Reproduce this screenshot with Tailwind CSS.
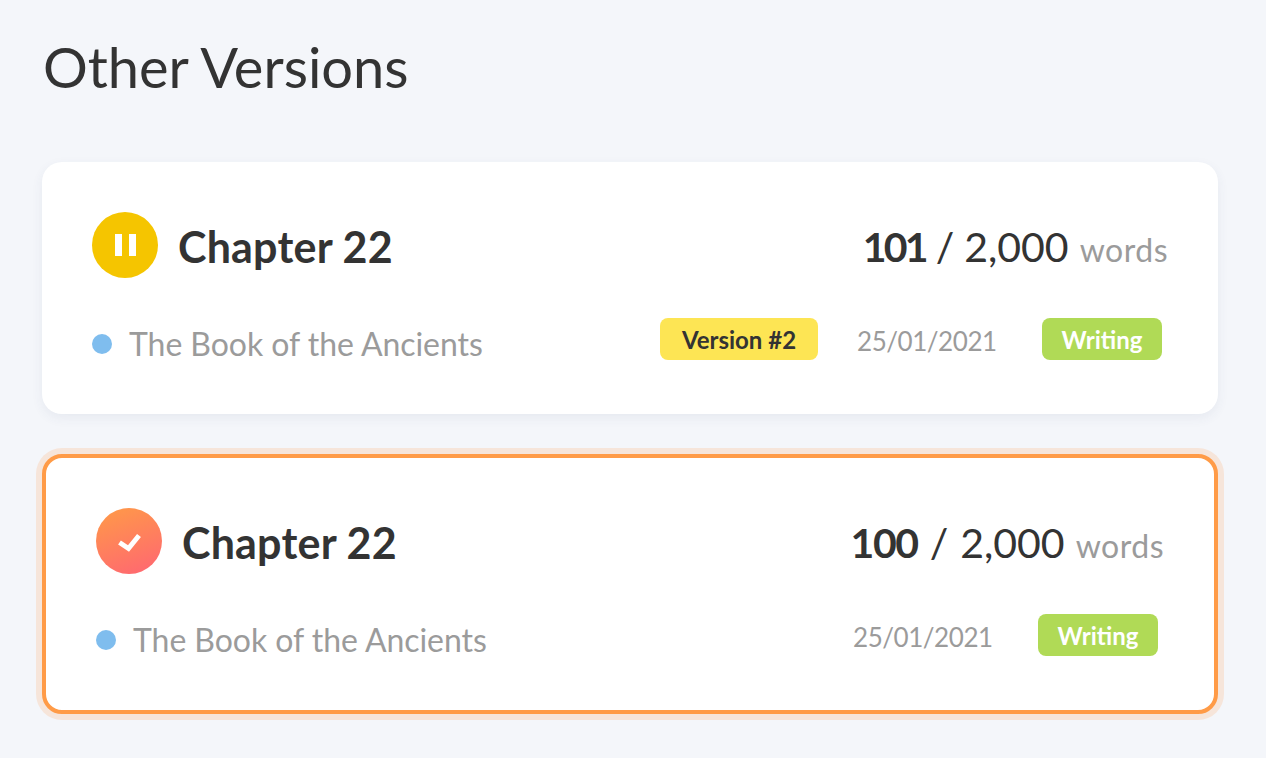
<!DOCTYPE html>
<html lang="en">
<head>
    <meta charset="utf-8">
    <title>Other Versions</title>
    <script src="https://cdn.jsdelivr.net/npm/@tailwindcss/browser@4"></script>
</head>
<body class="bg-[#f4f6fa] font-['Lato',sans-serif] text-[#333333] w-[1266px] h-[758px] overflow-hidden">
    <div class="px-[42px] pr-[48px]">
        <h1 class="h-[162px] pt-[32px] pl-[1px] text-[56px] leading-[70px] font-normal">Other Versions</h1>

        <!-- Paused version -->
        <div class="bg-white rounded-[20px] h-[252px] pt-[50px] px-[50px] shadow-[0_4px_12px_rgba(60,70,110,0.07)]">
            <div class="flex items-center justify-between h-[66px]">
                <div class="flex items-center gap-[20px]">
                    <div class="w-[66px] h-[66px] rounded-full bg-[#f5c500] flex items-center justify-center gap-[7px]">
                        <span class="w-[7px] h-[22px] bg-white"></span>
                        <span class="w-[7px] h-[22px] bg-white"></span>
                    </div>
                    <span class="text-[43px] tracking-[0.2px] font-bold leading-none mt-[2px]">Chapter 22</span>
                </div>
                <div class="flex items-baseline gap-[11px] whitespace-nowrap mt-[4px]">
                    <span class="text-[41px]"><b class="tracking-[-2.8px]">101</b><span class="ml-[10px]">/</span><span class="ml-[10px]">2,000</span></span>
                    <span class="text-[32px] tracking-[0.5px] text-[#9b9b9b]">words</span>
                </div>
            </div>
            <div class="flex items-center justify-between mt-[40px] h-[42px]">
                <div class="flex items-center gap-[17px] mt-[10px]">
                    <span class="w-[20px] h-[20px] rounded-full bg-[#7fbdee]"></span>
                    <span class="text-[32px] tracking-[-0.05px] text-[#9b9b9b] leading-none">The Book of the Ancients</span>
                </div>
                <div class="flex items-center pr-[6px]">
                    <span class="w-[158px] h-[42px] pt-[2px] rounded-[8px] bg-[#fde554] text-[24px] font-bold flex items-center justify-center">Version #2</span>
                    <span class="w-[139px] ml-[39px] mr-[46px] pt-[4px] text-[26px] tracking-[-0.45px] text-[#9b9b9b] text-center whitespace-nowrap">25/01/2021</span>
                    <span class="w-[120px] h-[42px] pt-[2px] rounded-[8px] bg-[#b0da56] text-white text-[24px] font-bold flex items-center justify-center">Writing</span>
                </div>
            </div>
        </div>

        <!-- Selected version -->
        <div class="bg-white rounded-[20px] h-[260px] mt-[40px] pt-[50px] px-[50px] border-4 border-[#ff9b47] shadow-[0_0_0_6px_#f6e5da]">
            <div class="flex items-center justify-between h-[66px]">
                <div class="flex items-center gap-[20px]">
                    <div class="w-[66px] h-[66px] rounded-full bg-linear-[160deg] from-[#ff9b47] to-[#ff6573]">
                        <svg viewBox="0 0 66 66" class="w-[66px] h-[66px]" fill="none" stroke="#ffffff" stroke-width="5">
                            <path d="M23.5 34.5L32.5 40.5L43 27.5"/>
                        </svg>
                    </div>
                    <span class="text-[43px] tracking-[0.2px] font-bold leading-none mt-[2px]">Chapter 22</span>
                </div>
                <div class="flex items-baseline gap-[11px] whitespace-nowrap mt-[4px]">
                    <span class="text-[41px]"><b class="tracking-[-1.4px]">100</b><span class="ml-[12px]">/</span><span class="ml-[12px]">2,000</span></span>
                    <span class="text-[32px] tracking-[0.5px] text-[#9b9b9b]">words</span>
                </div>
            </div>
            <div class="flex items-center justify-between mt-[40px] h-[42px]">
                <div class="flex items-center gap-[17px] mt-[10px]">
                    <span class="w-[20px] h-[20px] rounded-full bg-[#7fbdee]"></span>
                    <span class="text-[32px] tracking-[-0.05px] text-[#9b9b9b] leading-none">The Book of the Ancients</span>
                </div>
                <div class="flex items-center pr-[6px]">
                    <span class="w-[139px] mr-[46px] pt-[4px] text-[26px] tracking-[-0.45px] text-[#9b9b9b] text-center whitespace-nowrap">25/01/2021</span>
                    <span class="w-[120px] h-[42px] pt-[2px] rounded-[8px] bg-[#b0da56] text-white text-[24px] font-bold flex items-center justify-center">Writing</span>
                </div>
            </div>
        </div>
    </div>
</body>
</html>
